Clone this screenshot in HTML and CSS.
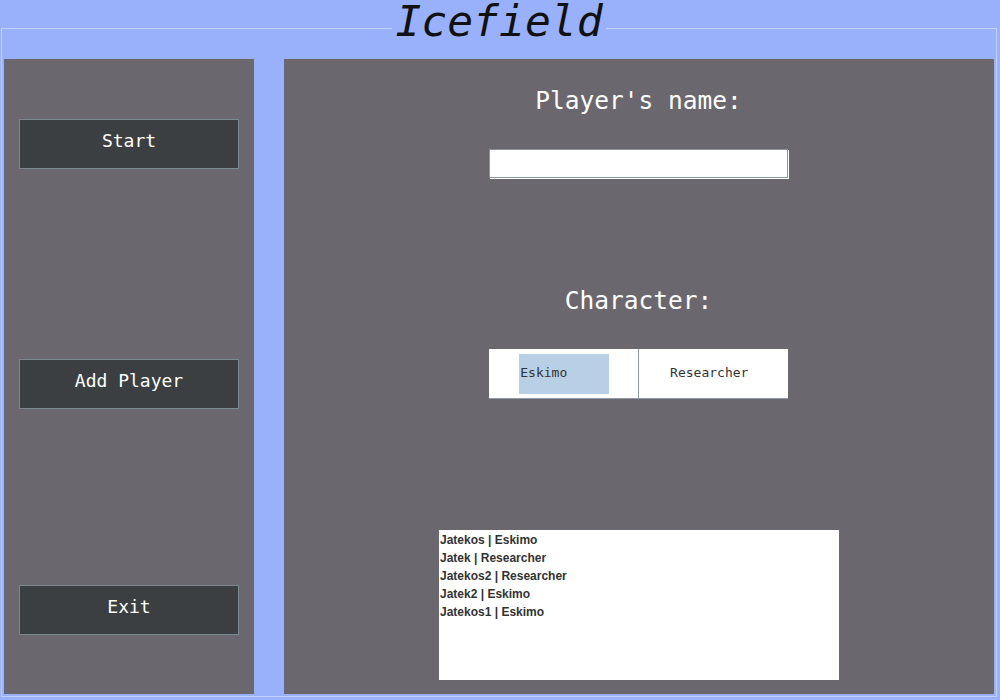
FILE: index.html
```html
<!DOCTYPE html>
<html>
<head>
<meta charset="utf-8">
<link rel="stylesheet" href="styles.css">
</head>
<body>
<div class="frame">
  <div class="title">Icefield</div>
  <div class="side">
    <button class="btn btn-start">Start</button>
    <button class="btn btn-add">Add Player</button>
    <button class="btn btn-exit">Exit</button>
  </div>
  <div class="main">
    <div class="label label-name">Player's name:</div>
    <div class="input"></div>
    <div class="label label-char">Character:</div>
    <div class="toggle">
      <div class="cell cell-left"><span class="opt selected">Eskimo</span></div>
      <div class="cell cell-right"><span class="opt">Researcher</span></div>
    </div>
    <div class="list">
      <div class="row">Jatekos | Eskimo</div>
      <div class="row">Jatek | Researcher</div>
      <div class="row">Jatekos2 | Researcher</div>
      <div class="row">Jatek2 | Eskimo</div>
      <div class="row">Jatekos1 | Eskimo</div>
    </div>
  </div>
</div>
</body>
</html>
```
FILE: styles.css
```css
html, body {
  margin: 0;
  padding: 0;
  background: #99b0fa;
  width: 1000px;
  height: 700px;
  overflow: hidden;
}
.frame {
  position: relative;
  box-sizing: border-box;
  margin: 28px 0 0 1px;
  width: 996px;
  height: 669px;
  border: 1px solid #c2d0fc;
  padding: 30px 2px 2px 2px;
  display: flex;
  gap: 30px;
}
.title {
  position: absolute;
  left: 0;
  right: 0;
  top: -28px;
  margin: 0 auto;
  width: 214px;
  text-align: center;
  background: #99b0fa;
  font-family: "DejaVu Sans Mono", monospace;
  font-style: italic;
  font-size: 43px;
  line-height: 40px;
  height: 40px;
  color: #111;
}
.side {
  width: 250px;
  background: #6a686e;
  display: flex;
  flex-direction: column;
  align-items: center;
  padding-top: 60px;
  box-sizing: border-box;
}
.btn {
  width: 220px;
  height: 50px;
  box-sizing: border-box;
  background: #3c3f41;
  border: 1px solid #7b8990;
  color: #fff;
  font-family: "DejaVu Sans Mono", monospace;
  font-size: 18px;
  padding: 0 0 7px 0;
  margin: 0;
}
.btn-add { margin-top: 190px; }
.btn-exit { margin-top: 176px; }
.main {
  flex: 1;
  background: #6a686e;
  display: flex;
  flex-direction: column;
  align-items: center;
  padding-top: 28px;
  box-sizing: border-box;
}
.label {
  font-family: "DejaVu Sans Mono", monospace;
  font-size: 24.5px;
  line-height: 28px;
  color: #fff;
  height: 28px;
}
.label-name { margin-right: 1px; }
.label-char { margin-top: 109px; margin-right: 1px; }
.input {
  margin-top: 34px;
  width: 299px;
  height: 29px;
  box-sizing: border-box;
  background: #fff;
  border: 1px solid #8b95a0;
  box-shadow: 1px 1px 0 #fff;
  margin-right: 1px;
}
.toggle {
  margin-top: 34px;
  margin-right: 1px;
  width: 299px;
  height: 50px;
  box-sizing: border-box;
  background: #fff;
  border-bottom: 1px solid #8e9aa8;
  display: flex;
  font-family: "DejaVu Sans Mono", monospace;
  font-size: 13px;
  color: #333;
}
.cell {
  width: 150px;
  display: flex;
  align-items: center;
  justify-content: center;
}
.cell-left { border-right: 1px solid #8e9aa8; width: 149px; }
.opt {
  width: 90px;
  height: 40px;
  line-height: 38px;
  box-sizing: border-box;
  text-align: center;
}
.cell-right .opt { margin-right: 8px; }
.opt.selected {
  background: #b8cfe6;
  text-align: left;
  padding-left: 1px;
  margin-left: 2px;
}
.list {
  margin-top: 131px;
  width: 400px;
  height: 150px;
  background: #fff;
  box-sizing: border-box;
  padding: 1px 1px;
  font-family: "Liberation Sans", Arial, sans-serif;
  font-weight: bold;
  font-size: 12px;
  line-height: 18px;
  color: #333;
}
```
